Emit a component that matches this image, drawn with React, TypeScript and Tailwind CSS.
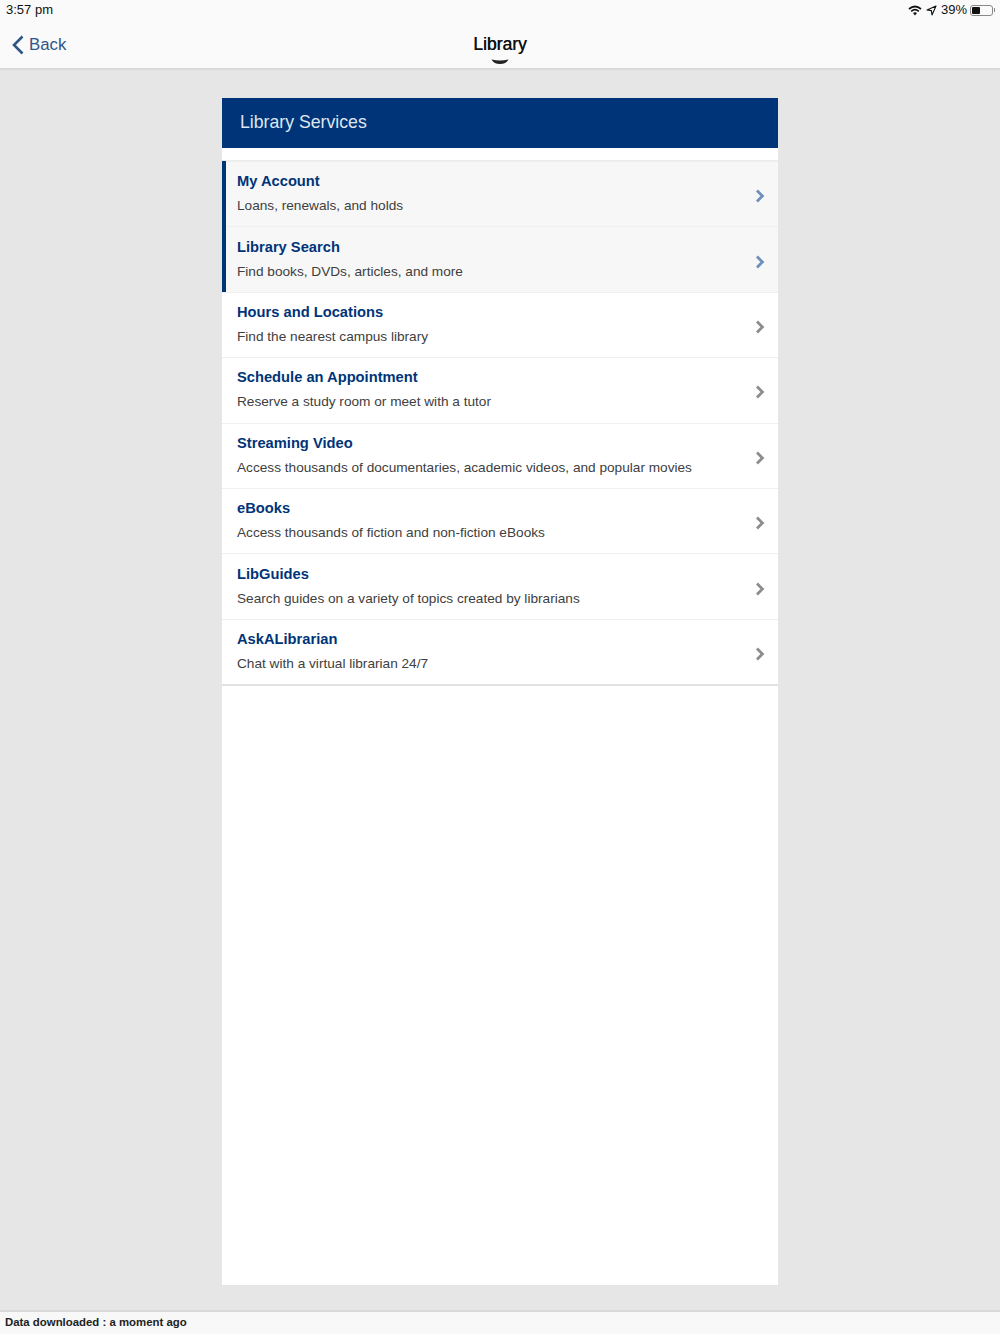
import React from 'react'

const services = [
  { title: 'My Account', desc: 'Loans, renewals, and holds', active: true },
  { title: 'Library Search', desc: 'Find books, DVDs, articles, and more', active: true },
  { title: 'Hours and Locations', desc: 'Find the nearest campus library', active: false },
  { title: 'Schedule an Appointment', desc: 'Reserve a study room or meet with a tutor', active: false },
  { title: 'Streaming Video', desc: 'Access thousands of documentaries, academic videos, and popular movies', active: false },
  { title: 'eBooks', desc: 'Access thousands of fiction and non-fiction eBooks', active: false },
  { title: 'LibGuides', desc: 'Search guides on a variety of topics created by librarians', active: false },
  { title: 'AskALibrarian', desc: 'Chat with a virtual librarian 24/7', active: false },
]

function StatusBar() {
  return (
    <div className="flex h-[20px] items-center justify-between pl-[6px] pr-[5px] text-[13px] text-[#111]">
      <span>3:57 pm</span>
      <div className="flex items-center">
        <svg width="14" height="11" viewBox="0 0 14 11" className="mr-[4px]">
          <path d="M1 4 Q7 -1 13 4" fill="none" stroke="#111" strokeWidth="1.7" />
          <path d="M3.2 6.3 Q7 3 10.8 6.3" fill="none" stroke="#111" strokeWidth="1.7" />
          <path d="M5 8 Q7 6.6 9 8 L7 10.5 Z" fill="#111" />
        </svg>
        <svg width="11" height="11" viewBox="0 0 11 11" className="mr-[4px]">
          <path d="M10 1 L1 5 L5.4 5.6 L6 10 Z" fill="none" stroke="#111" strokeWidth="1.1" strokeLinejoin="round" />
        </svg>
        <span className="mr-[3px]">39%</span>
        <div className="flex items-center">
          <div className="h-[11px] w-[23px] rounded-[3px] border border-[#888] p-[1px]">
            <div className="h-full w-[8px] rounded-[1px] bg-[#111]" />
          </div>
          <div className="ml-[1px] h-[4px] w-[1px] bg-[#888]" />
        </div>
      </div>
    </div>
  )
}

function NavBar() {
  return (
    <div className="relative flex h-[48px] items-center justify-center">
      <div className="absolute left-[12px] top-[14px] flex items-center text-[#2f5587]">
        <svg width="12" height="20" viewBox="0 0 12 20" className="mr-[5px]">
          <path d="M10.5 1.5 L2 10 L10.5 18.5" fill="none" stroke="#2f5587" strokeWidth="2.6" />
        </svg>
        <span className="mt-[1px] text-[16.8px] leading-[20px]">Back</span>
      </div>
      <span className="mb-[-1px] text-[17.5px] font-medium text-[#111] [text-shadow:0.3px_0_0_#111]">Library</span>
      <svg width="18" height="6" viewBox="0 0 18 6" className="absolute left-[491px] top-[39px]">
        <path d="M0.5 0.5 Q9 2.6 17.5 0.5 Q15 5 9 5 Q3 5 0.5 0.5 Z" fill="#222" />
      </svg>
    </div>
  )
}

function ServiceRow({ title, desc, active }: { title: string; desc: string; active: boolean }) {
  return (
    <div
      className={
        active
          ? 'flex h-[65.4px] items-center bg-[#f7f7f7] pl-[15px] pr-[13px] shadow-[inset_4px_0_0_#003478,inset_0_1px_0_#efefef]'
          : 'flex h-[65.4px] items-center bg-white pl-[15px] pr-[13px] shadow-[inset_0_1px_0_#efefef]'
      }
    >
      <div className="min-w-0 flex-1">
        <div className="text-[14.7px] font-bold leading-[20px] text-[#003478]">{title}</div>
        <div className="mt-[5px] text-[13.65px] leading-[20px] text-[#404040]">{desc}</div>
      </div>
      <svg width="10" height="14" viewBox="0 0 10 14" className="mt-[5px]">
        <path
          d="M2 1.5 L7.4 7 L2 12.5"
          fill="none"
          stroke={active ? '#6d8fbb' : '#8c8c8c'}
          strokeWidth="2.8"
        />
      </svg>
    </div>
  )
}

export default function App() {
  return (
    <div className="flex h-[1334px] flex-col bg-[#e6e6e6] font-['Liberation_Sans',Arial,sans-serif]">
      <header className="h-[70px] border-b-2 border-[#d9d9d9] bg-[#fafafa]">
        <StatusBar />
        <NavBar />
      </header>

      <main className="flex-1 pt-[28px]">
        <div className="mx-auto flex h-[1187px] w-[556px] flex-col bg-white">
          <div className="flex h-[50px] items-center bg-[#003478] pb-[1px] pl-[18px] text-[17.7px] font-light text-[#dfe6f0]">
            Library Services
          </div>
          <div className="mt-[12px] border-t border-[#ececec]">
            {services.map((s) => (
              <ServiceRow key={s.title} title={s.title} desc={s.desc} active={s.active} />
            ))}
          </div>
          <div className="h-[2px] bg-[#e2e2e2]" />
        </div>
      </main>

      <footer className="flex h-[24px] items-center border-t-2 border-[#d9d9d9] bg-[#f8f8f8] pl-[5px] text-[11.4px] font-bold text-[#222]">
        Data downloaded : a moment ago
      </footer>
    </div>
  )
}
